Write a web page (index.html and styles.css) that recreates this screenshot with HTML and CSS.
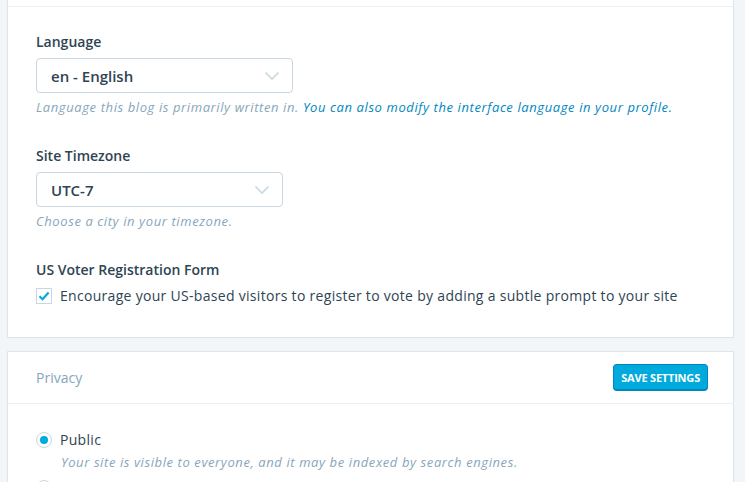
FILE: index.html
```html
<!DOCTYPE html>
<html lang="en">
<head>
    <meta charset="UTF-8">
    <meta name="viewport" content="width=device-width, initial-scale=1.0">
    <title>Site Settings</title>
    <link rel="stylesheet" href="styles.css">
</head>
<body>
    <div class="settings">
        <!-- General settings card (top part scrolled off) -->
        <div class="card">
            <div class="card-cut"></div>
            <div class="card-body">
                <div class="field">
                    <label class="field-label" for="lang">Language</label>
                    <div class="select select-lang" id="lang">
                        <span>en - English</span>
                        <svg class="chevron" width="16" height="10" viewBox="0 0 16 10"><path d="M1.5 1.5 8 8l6.5-6.5" fill="none" stroke="#c8d7e1" stroke-width="1.6"/></svg>
                    </div>
                    <p class="help">Language this blog is primarily written in. <a href="#">You can also modify the interface language in your profile.</a></p>
                </div>

                <div class="field">
                    <label class="field-label" for="tz">Site Timezone</label>
                    <div class="select select-tz" id="tz">
                        <span>UTC-7</span>
                        <svg class="chevron" width="16" height="10" viewBox="0 0 16 10"><path d="M1.5 1.5 8 8l6.5-6.5" fill="none" stroke="#c8d7e1" stroke-width="1.6"/></svg>
                    </div>
                    <p class="help">Choose a city in your timezone.</p>
                </div>

                <div class="field field-last">
                    <div class="field-label">US Voter Registration Form</div>
                    <label class="check-row">
                        <span class="checkbox">
                            <svg width="12" height="10" viewBox="0 0 12 10"><path d="M1.5 5.2 4.6 8.2 10.6 1.6" fill="none" stroke="#00aadc" stroke-width="2.2"/></svg>
                        </span>
                        Encourage your US-based visitors to register to vote by adding a subtle prompt to your site
                    </label>
                </div>
            </div>
        </div>

        <!-- Privacy card -->
        <div class="card">
            <div class="card-header">
                <span class="card-title">Privacy</span>
                <button class="btn-primary">Save Settings</button>
            </div>
            <div class="card-body privacy-body">
                <label class="radio-row">
                    <span class="radio checked"></span>
                    Public
                </label>
                <p class="radio-help">Your site is visible to everyone, and it may be indexed by search engines.</p>
                <label class="radio-row">
                    <span class="radio"></span>
                    Hidden
                </label>
            </div>
        </div>
    </div>
</body>
</html>
```

FILE: styles.css
```css
body {
    margin: 0;
    background: #f3f6f8;
    font-family: "Open Sans", "Noto Sans", sans-serif;
    color: #2e4453;
    overflow: hidden;
}

.settings {
    padding: 0 12px 0 8px;
    display: flex;
    flex-direction: column;
    gap: 15px;
}

.card {
    background: #fff;
    box-shadow: 0 0 0 1px rgba(200, 215, 225, 0.5), 0 1px 2px #e9eff3;
}

.card-cut {
    height: 6px;
    border-bottom: 1px solid #e9eff3;
}

.card-body {
    padding: 25px 28px 31px;
}

.field {
    margin-bottom: 30px;
}

.field-last {
    margin-bottom: 0;
}

.field-label {
    display: block;
    font-size: 14px;
    font-weight: 600;
    line-height: 20px;
    margin-bottom: 6px;
}

.select {
    box-sizing: border-box;
    height: 35px;
    border: 1px solid #c8d7e1;
    border-radius: 4px;
    display: flex;
    align-items: center;
    justify-content: space-between;
    padding: 0 12px 0 14px;
    font-size: 15px;
    font-weight: 600;
}

.select-lang {
    width: 257px;
}

.select-tz {
    width: 247px;
}

.help {
    margin: 5px 0 0;
    font-size: 13px;
    font-style: italic;
    line-height: 18px;
    letter-spacing: 0.6px;
    color: #87a6bc;
}

.help a {
    color: #0087be;
    text-decoration: none;
}

.check-row {
    display: flex;
    align-items: center;
    gap: 8px;
    margin-top: 6px;
    font-size: 14px;
    line-height: 20px;
    letter-spacing: 0.3px;
}

.checkbox {
    box-sizing: border-box;
    width: 16px;
    height: 16px;
    border: 1px solid #c8d7e1;
    display: flex;
    align-items: center;
    justify-content: center;
}

.card-header {
    height: 51px;
    border-bottom: 1px solid #e9eff3;
    display: flex;
    align-items: center;
    justify-content: space-between;
    padding: 0 25px 0 28px;
}

.card-title {
    font-size: 14px;
    color: #87a6bc;
}

.btn-primary {
    height: 27px;
    padding: 0 7px;
    background: #00aadc;
    border: 1px solid #0087be;
    border-bottom-width: 2px;
    border-radius: 4px;
    color: #fff;
    font-family: inherit;
    font-size: 11px;
    font-weight: 700;
    text-transform: uppercase;
    letter-spacing: -0.2px;
}

.privacy-body {
    padding-top: 26px;
}

.radio-row {
    display: flex;
    align-items: center;
    gap: 8px;
    font-size: 14px;
    line-height: 20px;
    letter-spacing: 0.3px;
}

.radio {
    box-sizing: border-box;
    width: 16px;
    height: 16px;
    border: 1px solid #c8d7e1;
    border-radius: 50%;
    display: flex;
    align-items: center;
    justify-content: center;
}

.radio.checked::after {
    content: "";
    width: 8px;
    height: 8px;
    border-radius: 50%;
    background: #00aadc;
}

.radio-help {
    margin: 3px 0 7px 25px;
    font-size: 13px;
    font-style: italic;
    line-height: 18px;
    letter-spacing: 0.6px;
    color: #87a6bc;
}
```
